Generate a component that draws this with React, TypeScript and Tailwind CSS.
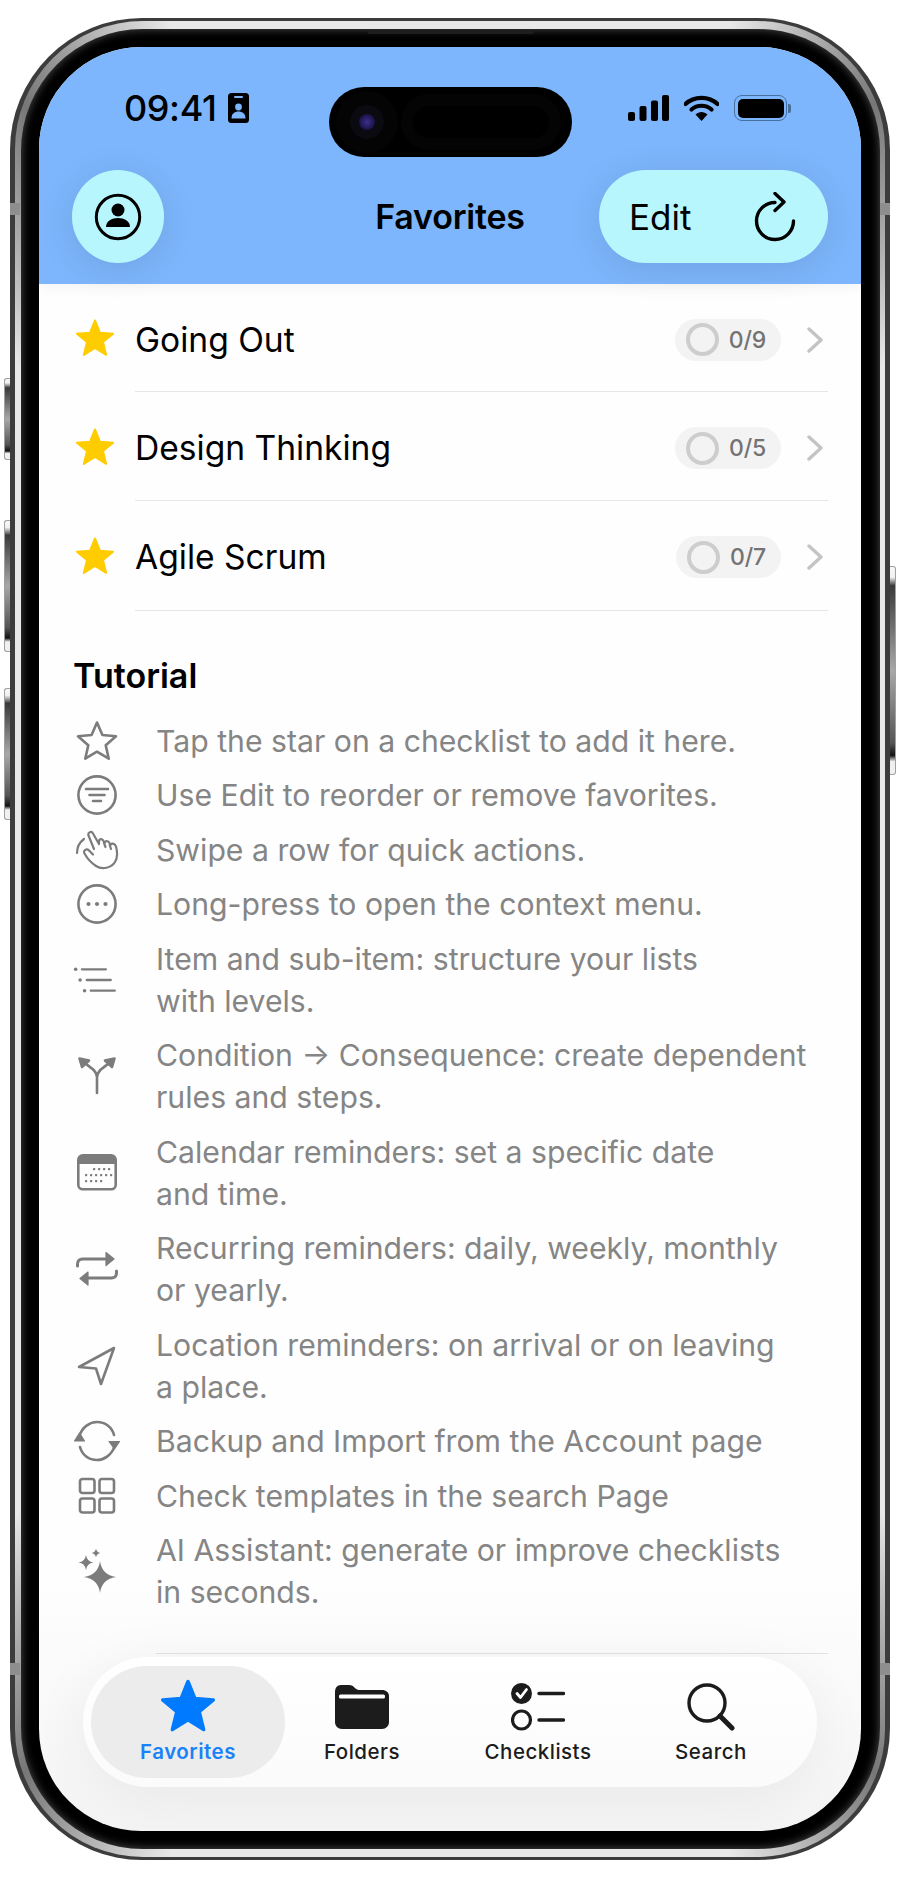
import React from "react";

const star = (cx: number, cy: number, R: number, r: number) => {
  const pts: string[] = [];
  for (let i = 0; i < 10; i++) {
    const a = (-90 + i * 36) * (Math.PI / 180);
    const d = i % 2 === 0 ? R : r;
    pts.push(`${(cx + d * Math.cos(a)).toFixed(2)},${(cy + d * Math.sin(a)).toFixed(2)}`);
  }
  return pts.join(" ");
};

const Star = ({ color, size, sw = 2 }: { color: string; size: number; sw?: number }) => (
  <svg width={size} height={size} viewBox="0 0 40 40">
    <polygon points={star(20, 21.5, 19, 8.4)} fill={color} stroke={color} strokeWidth={sw} strokeLinejoin="round" />
  </svg>
);

const G = "#7c7c7c";

const IconStar = () => (
  <svg width="44" height="44" viewBox="0 0 44 44">
    <polygon points={star(22, 23.5, 20, 9.2)} fill="none" stroke={G} strokeWidth="2.6" strokeLinejoin="round" />
  </svg>
);
const IconFilter = () => (
  <svg width="42" height="42" viewBox="0 0 42 42" fill="none" stroke={G} strokeLinecap="round">
    <circle cx="21" cy="21" r="18.6" strokeWidth="2.6" />
    <path d="M10 15h22M13.5 21h15M17 27h8" strokeWidth="2.6" />
  </svg>
);
const IconHand = () => (
  <svg width="44" height="42" viewBox="0 0 44 42" fill="none" stroke={G} strokeWidth="2.2" strokeLinecap="round" strokeLinejoin="round">
    <path d="M2 24C2 18 5 13 9 10" />
    <path d="M19 20 L13.5 6.5 C12.5 3.5 16.5 1.5 18 4.5 L24 15 L24 12 C24.5 9.5 27.5 9.5 28.5 12 L29.5 14 C30 11.5 33.5 11.5 34.5 14 L35.5 16 C36 14 40 14 41 17.5 C42.5 23 42.5 29 40 33 C36.5 39 27 41 21 37 C16.5 34 12 29 9.5 24.5 C8 21.5 11.5 19 14 21.5 L18 25.5" />
    <path d="M29 14l1.5 4M34.7 16l1.3 4" />
  </svg>
);
const IconMore = () => (
  <svg width="42" height="42" viewBox="0 0 42 42" fill="none">
    <circle cx="21" cy="21" r="18.6" stroke={G} strokeWidth="2.6" />
    <circle cx="12.5" cy="21" r="2.1" fill={G} />
    <circle cx="21" cy="21" r="2.1" fill={G} />
    <circle cx="29.5" cy="21" r="2.1" fill={G} />
  </svg>
);
const IconList = () => (
  <svg width="54" height="34" viewBox="0 0 54 34" fill="none" stroke={G} strokeWidth="2.6" strokeLinecap="round">
    <path d="M10 5h27M15.5 17h27M20 29h27" />
    <circle cx="3" cy="5" r="2" fill={G} stroke="none" />
    <circle cx="8" cy="17" r="2" fill={G} stroke="none" />
    <circle cx="13" cy="29" r="2" fill={G} stroke="none" />
  </svg>
);
const IconSplit = () => (
  <svg width="38" height="38" viewBox="0 0 38 38" fill="none" stroke={G} strokeWidth="2.6" strokeLinecap="round" strokeLinejoin="round">
    <path d="M19 36V20C19 14 13 11 4 4M19 20C19 14 25 11 34 4" />
    <path d="M1.5 1.5L11 3.5L4 10Z M36.5 1.5L27 3.5L34 10Z" fill={G} />
  </svg>
);
const IconCal = () => (
  <svg width="40" height="38" viewBox="0 0 40 38" fill="none">
    <rect x="1.3" y="1.3" width="37.4" height="34" rx="4.5" stroke={G} strokeWidth="2.6" />
    <path d="M1.3 10V6a4.5 4.5 0 0 1 4.5-4.5h28.4a4.5 4.5 0 0 1 4.5 4.5v4Z" fill={G} />
    <g fill={G}>
      {[[17, 15], [22, 15], [27, 15], [32, 15], [9, 21], [14, 21], [19, 21], [24, 21], [29, 21], [34, 21], [9, 27], [14, 27], [19, 27], [24, 27]].map(([x, y]) => (
        <rect key={`${x}-${y}`} x={x - 1} y={y - 1} width="2.2" height="2.2" rx=".6" />
      ))}
    </g>
  </svg>
);
const IconRepeat = () => (
  <svg width="42" height="36" viewBox="0 0 42 36" fill="none" stroke={G} strokeWidth="3" strokeLinecap="round" strokeLinejoin="round">
    <path d="M1.5 15V13C1.5 10 3.5 8 6.5 8H29" />
    <path d="M40.5 20V22C40.5 25 38.5 27 35.5 27H12" />
    <path d="M30 1.5L38 8L30 14.5Z M12 21L4 27.5L12 34Z" fill={G} strokeWidth="1.2" />
  </svg>
);
const IconNav = () => (
  <svg width="40" height="42" viewBox="0 0 40 42" fill="none" stroke={G} strokeWidth="2.6" strokeLinejoin="round">
    <path d="M37 3L2 22L19 23.5L24 39Z" />
  </svg>
);
const IconSync = () => (
  <svg width="48" height="42" viewBox="0 0 48 42" fill="none" stroke={G} strokeWidth="2.6" strokeLinecap="round" strokeLinejoin="round">
    <path d="M6.5 16C9 7 17 2 24 2C32 2 39 7 41 15" />
    <path d="M41.5 26C39 35 31 40 24 40C16 40 9 35 7 27" />
    <path d="M1.5 21L6.5 13L11.5 21Z M36 21.5L41.5 29L46.5 21.5Z" fill={G} strokeWidth="1.2" />
  </svg>
);
const IconGrid = () => (
  <svg width="38" height="38" viewBox="0 0 38 38" fill="none" stroke={G} strokeWidth="2.6">
    <rect x="2" y="2" width="14.5" height="14" rx="2.5" />
    <rect x="21.5" y="2" width="14.5" height="14" rx="2.5" />
    <rect x="2" y="21.5" width="14.5" height="14" rx="2.5" />
    <rect x="21.5" y="21.5" width="14.5" height="14" rx="2.5" />
  </svg>
);
const sparkle = (x: number, y: number, rx: number, ry: number, k = 0.12) =>
  `M${x} ${y - ry}Q${x + rx * k} ${y - ry * k} ${x + rx} ${y}Q${x + rx * k} ${y + ry * k} ${x} ${y + ry}Q${x - rx * k} ${y + ry * k} ${x - rx} ${y}Q${x - rx * k} ${y - ry * k} ${x} ${y - ry}Z`;
const IconSpark = () => (
  <svg width="40" height="48" viewBox="0 0 40 48" fill={G}>
    <path d={sparkle(23, 30, 16, 16)} />
    <path d={sparkle(9, 15.5, 7.5, 7.5)} />
    <path d={sparkle(19, 6, 4.5, 4.5)} />
  </svg>
);

const rows = [
  { t: "Going Out", c: "0/9" },
  { t: "Design Thinking", c: "0/5" },
  { t: "Agile Scrum", c: "0/7" },
];

const tips: { icon: React.ReactNode; lines: string[] }[] = [
  { icon: <IconStar />, lines: ["Tap the star on a checklist to add it here."] },
  { icon: <IconFilter />, lines: ["Use Edit to reorder or remove favorites."] },
  { icon: <IconHand />, lines: ["Swipe a row for quick actions."] },
  { icon: <IconMore />, lines: ["Long-press to open the context menu."] },
  { icon: <IconList />, lines: ["Item and sub-item: structure your lists", "with levels."] },
  { icon: <IconSplit />, lines: ["Condition → Consequence: create dependent", "rules and steps."] },
  { icon: <IconCal />, lines: ["Calendar reminders: set a specific date", "and time."] },
  { icon: <IconRepeat />, lines: ["Recurring reminders: daily, weekly, monthly", "or yearly."] },
  { icon: <IconNav />, lines: ["Location reminders: on arrival or on leaving", "a place."] },
  { icon: <IconSync />, lines: ["Backup and Import from the Account page"] },
  { icon: <IconGrid />, lines: ["Check templates in the search Page"] },
  { icon: <IconSpark />, lines: ["AI Assistant: generate or improve checklists", "in seconds."] },
];

const SideButton = ({ cls }: { cls: string }) => (
  <div className={`absolute left-[-6px] w-[7px] rounded-l-[3px] border border-r-0 border-[#a0a0a0] bg-[linear-gradient(180deg,#f8f8f8_0%,#f0f0f0_5%,#3a3a3a_11%,#a8a8a8_50%,#555555_82%,#111111_90%,#f0f0f0_93%)] ${cls}`} />
);

const Band = ({ cls }: { cls: string }) => <div className={`absolute z-10 w-[10px] h-[12px] bg-[#8e8e8e] ${cls}`} />;

export default function App() {
  return (
    <div className="w-[900px] h-[1878px] bg-white pt-[18px] pl-[10px] font-['Inter','Liberation_Sans',sans-serif]">
      <div className="relative w-[880px] h-[1842px]">
        <SideButton cls="top-[360px] h-[82px]" />
        <SideButton cls="top-[502px] h-[132px]" />
        <SideButton cls="top-[670px] h-[132px]" />
        <div className="absolute right-[-6px] top-[548px] w-[7px] h-[209px] rounded-r-[3px] border border-l-0 border-[#a0a0a0] bg-[linear-gradient(180deg,#f8f8f8_0%,#f0f0f0_5%,#3a3a3a_9%,#a8a8a8_50%,#555555_85%,#111111_91%,#f0f0f0_94%)]" />
        <Band cls="left-0 top-[185px]" />
        <Band cls="right-0 top-[185px]" />
        <Band cls="left-0 top-[1645px]" />
        <Band cls="right-0 top-[1645px]" />
        <div className="absolute z-10 left-[357px] top-[12px] w-[167px] h-[4px] rounded-b-[3px] bg-[#1e1e1e]" />
        <div className="relative h-full rounded-[132px] bg-[#3c3c3c] px-[5px] py-[3px]">
          <div className="h-full rounded-[128px] bg-[conic-gradient(#e8e8e8_0deg,#e8e8e8_17deg,#777777_27deg,#e8e8e8_37deg,#e8e8e8_143deg,#777777_153deg,#e8e8e8_163deg,#e8e8e8_197deg,#777777_207deg,#e8e8e8_217deg,#e8e8e8_323deg,#777777_333deg,#e8e8e8_343deg)] px-[5.5px] py-[8px]">
            <div className="h-full rounded-[122px] bg-black px-[18.5px] py-[18px] shadow-[inset_0_0_10px_rgba(255,255,255,0.32)]">
              <div className="h-full rounded-[102px] overflow-hidden flex flex-col bg-[linear-gradient(180deg,#fefefe_0%,#fefefe_86%,#f4f4f4_100%)]">
                {/* header */}
                <header className="relative z-10 h-[237px] shrink-0 bg-[#7db6fc] pt-[40px] shadow-[0_2px_14px_rgba(0,0,0,0.05)]">
                  <div className="flex h-[70px]">
                    <div className="w-[289.5px] pl-[85px] flex items-start gap-[12px] pt-[5px]">
                      <span className="text-[36px] leading-[32px] font-medium tracking-[-0.4px] text-black">09:41</span>
                      <svg width="21" height="30" viewBox="0 0 21 30" className="mt-[1px]">
                        <rect width="21" height="30" rx="3.5" fill="#000" />
                        <rect x="6" y="3" width="9" height="2" rx="1" fill="#7db6fc" />
                        <circle cx="10.5" cy="14" r="3.4" fill="#7db6fc" />
                        <path d="M3.5 25.5c0-5 3-7 7-7s7 2 7 7Z" fill="#7db6fc" />
                      </svg>
                    </div>
                    <div className="relative w-[243.5px] h-[70px] rounded-full bg-black flex items-center pl-[7px]">
                      <div className="w-[62px] h-[62px] rounded-full bg-[#040404] flex items-center justify-center">
                        <div className="w-[34px] h-[34px] rounded-full bg-[#0a0a10] flex items-center justify-center">
                          <div className="w-[16px] h-[16px] rounded-full bg-[radial-gradient(circle,#3b2f8a_0%,#1d1650_60%,#0a0a10_100%)]" />
                        </div>
                      </div>
                      <div className="w-[160px] h-[56px] ml-[3px] rounded-full bg-[#000000] border-[12px] border-[#040404]" />
                    </div>
                    <div className="ml-[56px] flex items-start pt-[8px] gap-[15px] h-[30px]">
                      <svg width="41" height="26" viewBox="0 0 41 26" fill="#000">
                        <rect x="0" y="17" width="7" height="9" rx="2" />
                        <rect x="11.5" y="11" width="7" height="15" rx="2" />
                        <rect x="23" y="5.5" width="7" height="20.5" rx="2" />
                        <rect x="34" y="0" width="7" height="26" rx="2" />
                      </svg>
                      <svg width="35" height="26" viewBox="0 0 35 26">
                        <path d="M1.5 9C10 .8 25 .8 33.5 9" fill="none" stroke="#000" strokeWidth="4.2" strokeLinecap="round" />
                        <path d="M7.5 14.5C13 9.5 22 9.5 27.5 14.5" fill="none" stroke="#000" strokeWidth="4.2" strokeLinecap="round" />
                        <path d="M11.5 19.5C15 16 20 16 23.5 19.5L17.5 26Z" fill="#000" />
                      </svg>
                      <div className="flex items-center h-[26px]">
                        <div className="w-[53px] h-[26px] rounded-[8px] border-[1.5px] border-[#48709f] p-[2.5px]">
                          <div className="h-full rounded-[5px] bg-black" />
                        </div>
                        <div className="w-[3px] h-[9px] ml-[1px] rounded-r-[2px] bg-[#48709f]" />
                      </div>
                    </div>
                  </div>
                  <div className="mt-[13px] px-[33px] flex items-center">
                    <button className="w-[92px] h-[93px] rounded-full bg-[#b8f6fe] flex items-center justify-center shadow-[0_6px_36px_rgba(0,0,0,0.1)]">
                      <svg width="48" height="48" viewBox="0 0 48 48" fill="none">
                        <circle cx="24" cy="24" r="21.7" stroke="#000" strokeWidth="3" />
                        <circle cx="24" cy="17" r="6.5" fill="#000" />
                        <path d="M12 34c0-6 6-9 12-9s12 3 12 9Z" fill="#000" />
                      </svg>
                    </button>
                    <h1 className="flex-1 pl-[137px] text-center text-[34px] leading-[40px] font-semibold text-black tracking-[-0.2px]">Favorites</h1>
                    <button className="w-[229px] h-[93px] rounded-full bg-[#b8f6fe] flex items-center justify-between pl-[30px] pr-[32px] shadow-[0_6px_36px_rgba(0,0,0,0.1)]">
                      <span className="text-[35px] leading-[40px] font-normal text-black">Edit</span>
                      <svg width="42" height="50" viewBox="0 0 42 50" fill="none" stroke="#000" strokeWidth="3.4" strokeLinecap="round" strokeLinejoin="round">
                        <path d="M21 10.5A18.5 18.5 0 1 0 39.5 29" />
                        <path d="M21 1.5L30 10L21 18.5" />
                      </svg>
                    </button>
                  </div>
                </header>

                {/* list */}
                <main className="flex-1 min-h-0">
                  {rows.map((r, i) => (
                    <div key={r.t} className={`flex ${i === 0 ? "h-[108px]" : "h-[109.25px]"}`}>
                      <div className="w-[96px] flex items-center pl-[36px]">
                        <Star color="#ffcc00" size={40} />
                      </div>
                      <div className="flex-1 mr-[33px] border-b-[1.5px] border-[#e6e6e6] pt-[4px] flex items-center">
                        <span className="flex-1 text-[33.6px] leading-[42px] text-black">{r.t}</span>
                        <div className="h-[42px] rounded-full bg-[#f3f3f3] flex items-center pl-[11px] pr-[15px] gap-[10px]">
                          <div className="w-[33px] h-[33px] rounded-full border-[4px] border-[#cdcdcd]" />
                          <span className="text-[23px] leading-[30px] font-medium tracking-[-0.2px] text-[#737373]">{r.c}</span>
                        </div>
                        <svg width="16" height="26" viewBox="0 0 16 26" fill="none" stroke="#c4c4c6" strokeWidth="3.4" strokeLinecap="round" strokeLinejoin="round" className="ml-[26px] mr-[5px]">
                          <path d="M2 2L14 13L2 24" />
                        </svg>
                      </div>
                    </div>
                  ))}

                  <h2 className="mt-[44px] ml-[34px] text-[34px] leading-[42px] font-semibold text-black">Tutorial</h2>
                  <div className="mt-[23px] flex flex-col gap-[12.5px]">
                    {tips.map((t) => (
                      <div key={t.lines[0]} className="flex items-center pl-[34px]">
                        <div className="w-[48px] h-[42px] mr-[35px] flex items-center justify-center shrink-0">{t.icon}</div>
                        <p className="text-[30.2px] leading-[42px] text-[#858585] whitespace-nowrap">
                          {t.lines.map((l) => (
                            <span key={l} className="block">{l}</span>
                          ))}
                        </p>
                      </div>
                    ))}
                  </div>
                  <div className="mt-[40px] ml-[117px] mr-[33px] border-b-[1.5px] border-[#e2e2e2]" />
                </main>

                {/* tab bar */}
                <nav className="mx-[44px] mb-[44px] h-[130px] shrink-0 rounded-[65px] bg-[linear-gradient(180deg,#ffffff,#fbfbfb)] flex items-center pl-[8px] shadow-[0_10px_60px_rgba(0,0,0,0.06)]">
                  <div className="w-[194px] h-[112px] rounded-full bg-[#ececed] flex flex-col items-center">
                    <div className="h-[68px] flex items-end">
                      <Star color="#007aff" size={56} sw={2.5} />
                    </div>
                    <span className="mt-[6px] text-[20.5px] leading-[24px] font-semibold tracking-[0.5px] text-[#1a82f8]">Favorites</span>
                  </div>
                  <div className="w-[154px] h-[112px] flex flex-col items-center">
                    <div className="h-[68px] flex items-end pb-[5px]">
                      <svg width="54" height="44" viewBox="0 0 54 44">
                        <path d="M0 7C0 3 2 0 6 0H14C17 0 18 1 20 3C21.5 4.5 23 5 25 5H47C51 5 54 7.5 54 11V37C54 41 51 44 47 44H7C3 44 0 41 0 37Z" fill="#1c1c1c" />
                        <rect x="4" y="9.5" width="46" height="4" rx="1.5" fill="#fff" />
                      </svg>
                    </div>
                    <span className="mt-[6px] text-[20.5px] leading-[24px] font-medium tracking-[0.5px] text-[#1c1c1c]">Folders</span>
                  </div>
                  <div className="w-[198px] h-[112px] flex flex-col items-center">
                    <div className="h-[68px] flex items-end pb-[3px]">
                      <svg width="54" height="48" viewBox="0 0 54 48">
                        <circle cx="10.5" cy="10.5" r="10.5" fill="#1c1c1c" />
                        <path d="M6 10.5L9.5 14.5L15.5 6.5" fill="none" stroke="#fff" strokeWidth="2.8" strokeLinecap="round" strokeLinejoin="round" />
                        <circle cx="10.5" cy="37" r="9" fill="none" stroke="#1c1c1c" strokeWidth="3.2" />
                        <path d="M28 10.5H52.5M28 37H52.5" stroke="#1c1c1c" strokeWidth="3.4" strokeLinecap="round" />
                      </svg>
                    </div>
                    <span className="mt-[6px] text-[20.5px] leading-[24px] font-medium tracking-[0.5px] text-[#1c1c1c]">Checklists</span>
                  </div>
                  <div className="w-[148px] h-[112px] flex flex-col items-center">
                    <div className="h-[68px] flex items-end pb-[3px]">
                      <svg width="48" height="48" viewBox="0 0 48 48" fill="none" stroke="#1c1c1c" strokeLinecap="round">
                        <circle cx="20" cy="20" r="18" strokeWidth="3.4" />
                        <path d="M33 33L45 45" strokeWidth="5" />
                      </svg>
                    </div>
                    <span className="mt-[6px] text-[20.5px] leading-[24px] font-medium tracking-[0.5px] text-[#1c1c1c]">Search</span>
                  </div>
                </nav>
              </div>
            </div>
          </div>
        </div>
      </div>
    </div>
  );
}
